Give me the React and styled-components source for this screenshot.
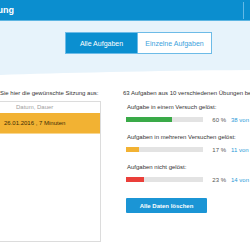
import React from "react";
import styled, { createGlobalStyle } from "styled-components";

const GlobalStyle = createGlobalStyle`
  html, body {
    margin: 0;
    padding: 0;
    background: #ffffff;
  }
  body {
    font-family: "Liberation Sans", Arial, sans-serif;
    overflow: hidden;
  }
`;

const Viewport = styled.div`
  width: 250px;
  height: 250px;
  overflow: hidden;
  background: #ffffff;
`;

const Header = styled.header`
  height: 20px;
  background: #0b8ecf;
  border-bottom: 1px solid #5db5e2;
  display: flex;
  justify-content: space-between;
`;

const Title = styled.div`
  width: 14px;
  display: flex;
  justify-content: flex-end;
  align-items: center;
  overflow: hidden;
  white-space: nowrap;
  color: #ffffff;
  font-weight: bold;
  font-size: 9px;
`;

const HeaderSide = styled.div`
  align-self: flex-end;
  width: 6px;
  height: 17px;
  margin-bottom: 1px;
  border-left: 1px solid #63b9e6;
`;

const Band = styled.section`
  height: 55px;
  background: #e7f3fb;
  display: flex;
  flex-direction: column;
  padding-top: 11px;
  box-sizing: border-box;
`;

const Tabs = styled.div`
  display: flex;
  margin-left: 65px;
`;

const Tab = styled.div`
  width: ${(p) => (p.$active ? "73px" : "74px")};
  height: 22px;
  box-sizing: border-box;
  border: 1px solid #6dbbe7;
  border-left-width: ${(p) => (p.$active ? "1px" : "0")};
  background: ${(p) => (p.$active ? "#0b8fd0" : "#ffffff")};
  color: ${(p) => (p.$active ? "#ffffff" : "#3ca2dc")};
  font-size: 7px;
  display: flex;
  align-items: center;
  justify-content: center;
`;

const Wave = styled.svg`
  display: block;
  margin-top: auto;
`;

const Content = styled.main`
  display: flex;
  gap: 22px;
  margin-left: -22px;
  padding-top: 13px;
`;

const LeftCol = styled.div`
  width: 123px;
  flex-shrink: 0;
`;

const Intro = styled.p`
  margin: 0 0 4px;
  font-size: 6px;
  line-height: 8px;
  color: #333333;
  white-space: nowrap;
`;

const SessionBox = styled.div`
  height: 141px;
  box-sizing: border-box;
  border: 1px solid #dcdcdc;
`;

const BoxHead = styled.div`
  height: 11px;
  line-height: 11px;
  padding-left: 37px;
  font-size: 6px;
  color: #a0a0a0;
`;

const SessionRow = styled.div`
  height: 21px;
  box-sizing: border-box;
  background: #f2b233;
  border-bottom: 1px solid #f8d68f;
  padding-left: 25px;
  display: flex;
  align-items: center;
  font-size: 6px;
  color: #3b2c05;
`;

const RightCol = styled.div`
  flex: 1;
  min-width: 0;
`;

const Summary = styled.p`
  margin: 0 0 6px;
  font-size: 6px;
  line-height: 8px;
  color: #333333;
  white-space: nowrap;
`;

const Stat = styled.div`
  margin-bottom: 11px;
`;

const StatLabel = styled.div`
  margin-left: 4px;
  font-size: 6px;
  line-height: 8px;
  color: #333333;
  white-space: nowrap;
`;

const BarRow = styled.div`
  display: flex;
  align-items: center;
  margin: 6px 0 0 3px;
  height: 5px;
  white-space: nowrap;
`;

const Track = styled.div`
  width: 77px;
  height: 5px;
  background: #e3e3e3;
  flex-shrink: 0;
`;

const Fill = styled.div`
  height: 100%;
  background: ${(p) => p.$color};
`;

const Percent = styled.span`
  width: 23px;
  text-align: right;
  font-size: 6px;
  color: #555555;
  flex-shrink: 0;
`;

const Count = styled.span`
  margin-left: 5px;
  font-size: 6px;
  color: #2a9bd8;
`;

const ClearButton = styled.button`
  margin: 5px 0 0 3px;
  width: 81px;
  height: 15px;
  padding: 0;
  border: none;
  border-radius: 1px;
  background: #1b95d5;
  color: #ffffff;
  font-family: inherit;
  font-size: 6px;
  font-weight: bold;
`;

const stats = [
  { label: "Aufgabe in einem Versuch gelöst:", pct: 60, count: 38, color: "#3aaa48" },
  { label: "Aufgaben in mehreren Versuchen gelöst:", pct: 17, count: 11, color: "#f2b233" },
  { label: "Aufgaben nicht gelöst:", pct: 23, count: 14, color: "#ea3f3a" },
];

export default function App() {
  return (
    <Viewport>
      <GlobalStyle />
      <Header>
        <Title>
          <span>Auswertung</span>
        </Title>
        <HeaderSide />
      </Header>
      <Band>
        <Tabs>
          <Tab $active>Alle Aufgaben</Tab>
          <Tab>Einzelne Aufgaben</Tab>
        </Tabs>
        <Wave width="250" height="7" viewBox="0 0 250 7" preserveAspectRatio="none">
          <path d="M0 6 C 60 4, 150 1.8, 250 1 L250 7 L0 7 Z" fill="#ffffff" />
        </Wave>
      </Band>
      <Content>
        <LeftCol>
          <Intro>Wählen Sie hier die gewünschte Sitzung aus:</Intro>
          <SessionBox>
            <BoxHead>Datum, Dauer</BoxHead>
            <SessionRow>26.01.2016 , 7 Minuten</SessionRow>
          </SessionBox>
        </LeftCol>
        <RightCol>
          <Summary>63 Aufgaben aus 10 verschiedenen Übungen bearbeitet</Summary>
          {stats.map((s) => (
            <Stat key={s.label}>
              <StatLabel>{s.label}</StatLabel>
              <BarRow>
                <Track>
                  <Fill $color={s.color} style={{ width: `${s.pct}%` }} />
                </Track>
                <Percent>{s.pct} %</Percent>
                <Count>{s.count} von 63</Count>
              </BarRow>
            </Stat>
          ))}
          <ClearButton>Alle Daten löschen</ClearButton>
        </RightCol>
      </Content>
    </Viewport>
  );
}
